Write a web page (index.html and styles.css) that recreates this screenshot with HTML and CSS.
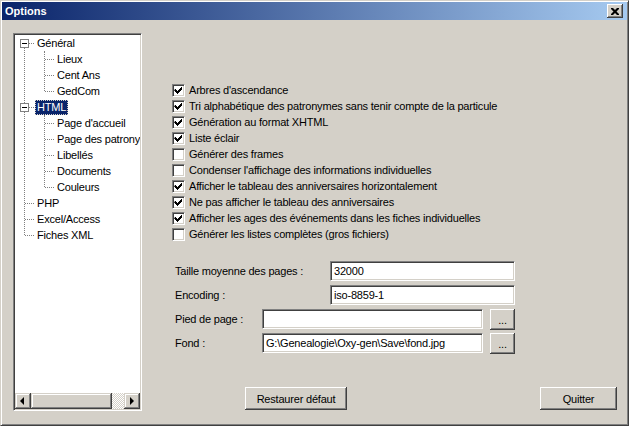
FILE: index.html
```html
<!DOCTYPE html>
<html>
    <head>
        <meta charset="utf-8" />
        <title>Options</title>
        <link rel="stylesheet" href="styles.css">
    </head>

    <body>
        <div class="window">
            <div class="titlebar">
                <span class="title">Options</span>
                <span class="close">
                    <svg width="8" height="7" viewBox="0 0 8 7">
                        <path d="M0 0h2l2 2 2-2h2v1l-2.5 2.5 2.5 2.5v1h-2l-2-2-2 2h-2v-1l2.5-2.5-2.5-2.5z" fill="#000" />
                    </svg>
                </span>
            </div>

            <div class="content">
                <!-- arbre des rubriques -->
                <div class="tree">
                    <div class="tree-view">
                        <div class="node root"><span class="toggle"></span><span class="label">Général</span></div>
                        <div class="group">
                            <div class="node child"><span class="label">Lieux</span></div>
                            <div class="node child"><span class="label">Cent Ans</span></div>
                            <div class="node child"><span class="label">GedCom</span></div>
                        </div>
                        <div class="node root"><span class="toggle"></span><span class="label selected">HTML</span></div>
                        <div class="group">
                            <div class="node child"><span class="label">Page d'accueil</span></div>
                            <div class="node child"><span class="label">Page des patronymes</span></div>
                            <div class="node child"><span class="label">Libellés</span></div>
                            <div class="node child"><span class="label">Documents</span></div>
                            <div class="node child"><span class="label">Couleurs</span></div>
                        </div>
                        <div class="node root leaf"><span class="label">PHP</span></div>
                        <div class="node root leaf"><span class="label">Excel/Access</span></div>
                        <div class="node root leaf"><span class="label">Fiches XML</span></div>
                    </div>
                    <div class="hscroll">
                        <span class="arrow left"></span>
                        <span class="thumb"></span>
                        <span class="track"></span>
                        <span class="arrow right"></span>
                    </div>
                </div>

                <!-- options HTML -->
                <div class="main">
                    <div class="checks">
                        <label class="check"><span class="box on"></span>Arbres d'ascendance</label>
                        <label class="check"><span class="box on"></span>Tri alphabétique des patronymes sans tenir compte de la particule</label>
                        <label class="check"><span class="box on"></span>Génération au format XHTML</label>
                        <label class="check"><span class="box on"></span>Liste éclair</label>
                        <label class="check"><span class="box"></span>Générer des frames</label>
                        <label class="check"><span class="box"></span>Condenser l'affichage des informations individuelles</label>
                        <label class="check"><span class="box on"></span>Afficher le tableau des anniversaires horizontalement</label>
                        <label class="check"><span class="box on"></span>Ne pas afficher le tableau des anniversaires</label>
                        <label class="check"><span class="box on"></span>Afficher les ages des événements dans les fiches individuelles</label>
                        <label class="check"><span class="box"></span>Générer les listes complètes (gros fichiers)</label>
                    </div>

                    <div class="fields">
                        <div class="field">
                            <span class="caption">Taille moyenne des pages :</span>
                            <span class="input wide">32000</span>
                        </div>
                        <div class="field">
                            <span class="caption">Encoding :</span>
                            <span class="input wide">iso-8859-1</span>
                        </div>
                        <div class="field">
                            <span class="caption">Pied de page :</span>
                            <span class="input path"></span>
                            <span class="btn more">...</span>
                        </div>
                        <div class="field">
                            <span class="caption">Fond :</span>
                            <span class="input path">G:\Genealogie\Oxy-gen\Save\fond.jpg</span>
                            <span class="btn more">...</span>
                        </div>
                    </div>

                    <div class="buttons">
                        <span class="btn restore">Restaurer défaut</span>
                        <span class="btn quit">Quitter</span>
                    </div>
                </div>
            </div>
        </div>
    </body>
</html>
```

FILE: styles.css
```css
body {
    margin: 0;
    font: 11px "Liberation Sans", Arial, sans-serif;
    letter-spacing: -0.2px;
    color: #000;
    background: #d4d0c8;
}

.window {
    width: 629px;
    height: 426px;
    box-sizing: border-box;
    padding: 1px;
    border: 1px solid;
    border-color: #d4d0c8 #404040 #404040 #d4d0c8;
    box-shadow: inset 1px 1px #fff, inset -1px -1px #808080;
    background: #d4d0c8;
    display: flex;
    flex-direction: column;
}

.titlebar {
    height: 18px;
    padding: 0 4px 0 3px;
    display: flex;
    align-items: center;
    justify-content: space-between;
    background: linear-gradient(to right, #0a246a, #a6caf0);
    color: #fff;
    font-weight: bold;
    letter-spacing: 0;
}

.close {
    width: 16px;
    height: 14px;
    box-sizing: border-box;
    display: flex;
    align-items: center;
    justify-content: center;
    background: #d4d0c8;
    box-shadow: inset -1px -1px #404040, inset 1px 1px #fff, inset -2px -2px #808080;
}

.content {
    display: flex;
    padding: 13px 0 0 11px;
}

/* arbre */
.tree {
    width: 129px;
    height: 378px;
    box-sizing: border-box;
    padding: 1px;
    border: 1px solid;
    border-color: #808080 #fff #fff #808080;
    box-shadow: inset 1px 1px #404040, inset -1px -1px #d4d0c8;
    background: #fff;
    display: flex;
    flex-direction: column;
}

.tree-view {
    flex: 1;
    position: relative;
    overflow: hidden;
}

.tree-view::before {
    content: "";
    position: absolute;
    left: 9px;
    top: 8px;
    height: 192px;
    border-left: 1px dotted #808080;
}

.node {
    position: relative;
    height: 16px;
    line-height: 16px;
    white-space: nowrap;
}

.node::before {
    content: "";
    position: absolute;
    top: 8px;
    border-top: 1px dotted #808080;
}

.root {
    padding-left: 20px;
}

.root::before {
    left: 10px;
    width: 9px;
}

.child {
    padding-left: 40px;
}

.child::before {
    left: 30px;
    width: 9px;
}

.group {
    position: relative;
}

.group::before {
    content: "";
    position: absolute;
    left: 29px;
    top: 0;
    bottom: 8px;
    border-left: 1px dotted #808080;
}

.toggle {
    position: absolute;
    left: 5px;
    top: 4px;
    width: 9px;
    height: 9px;
    box-sizing: border-box;
    border: 1px solid #808080;
    background: #fff;
    z-index: 1;
}

.toggle::after {
    content: "";
    position: absolute;
    left: 1px;
    top: 3px;
    width: 5px;
    height: 1px;
    background: #000;
}

.label {
    display: inline-block;
    height: 15px;
    line-height: 15px;
    padding: 0 2px;
}

.selected {
    background: #0a246a;
    color: #fff;
    outline: 1px dotted #d4d0c8;
    outline-offset: -1px;
}

.hscroll {
    display: flex;
    height: 16px;
}

.arrow,
.thumb {
    box-sizing: border-box;
    background: #d4d0c8;
    box-shadow: inset -1px -1px #404040, inset 1px 1px #d4d0c8, inset -2px -2px #808080, inset 2px 2px #fff;
    position: relative;
}

.arrow {
    width: 16px;
}

.arrow::after {
    content: "";
    position: absolute;
    top: 4px;
    border-top: 4px solid transparent;
    border-bottom: 4px solid transparent;
}

.arrow.left::after {
    left: 5px;
    border-right: 4px solid #000;
}

.arrow.right::after {
    left: 6px;
    border-left: 4px solid #000;
}

.thumb {
    width: 81px;
}

.track {
    flex: 1;
    background: repeating-conic-gradient(#fff 0 25%, #d4d0c8 0 50%) 0 0 / 2px 2px;
}

/* options */
.main {
    width: 445px;
    margin-left: 30px;
    padding-top: 49px;
    display: flex;
    flex-direction: column;
}

.check {
    display: flex;
    align-items: center;
    height: 16px;
    white-space: nowrap;
}

.box {
    width: 13px;
    height: 13px;
    box-sizing: border-box;
    margin-right: 4px;
    border: 1px solid;
    border-color: #808080 #fff #fff #808080;
    box-shadow: inset 1px 1px #404040, inset -1px -1px #d4d0c8;
    background: #fff;
}

.box.on {
    background: #fff url("data:image/svg+xml,%3Csvg xmlns='http://www.w3.org/2000/svg' width='11' height='11'%3E%3Cpath d='M2 4h1v1h1v1h1v-1h1v-1h1v-1h1v-1h1v3h-1v1h-1v1h-1v1h-1v1h-1v-1h-1v-1h-1v-1h-1z' fill='%23000'/%3E%3C/svg%3E") no-repeat 0 0;
}

.fields {
    width: 343px;
    margin-top: 19px;
    display: flex;
    flex-direction: column;
    gap: 4px;
}

.field {
    display: flex;
    align-items: center;
    height: 20px;
}

.caption {
    flex: 1;
    padding-left: 3px;
}

.input {
    height: 20px;
    box-sizing: border-box;
    padding: 0 3px;
    line-height: 18px;
    border: 1px solid;
    border-color: #808080 #fff #fff #808080;
    box-shadow: inset 1px 1px #404040, inset -1px -1px #d4d0c8;
    background: #fff;
    white-space: nowrap;
}

.input.wide {
    width: 185px;
}

.input.path {
    width: 221px;
}

.btn {
    box-sizing: border-box;
    display: flex;
    align-items: center;
    justify-content: center;
    background: #d4d0c8;
    box-shadow: inset -1px -1px #404040, inset 1px 1px #fff, inset -2px -2px #808080;
}

.more {
    width: 25px;
    height: 21px;
    margin-left: 7px;
    padding-top: 2px;
}

.buttons {
    margin-top: 34px;
    padding-left: 73px;
    display: flex;
    justify-content: space-between;
}

.restore,
.quit {
    height: 23px;
}

.restore {
    width: 102px;
}

.quit {
    width: 77px;
}
```
